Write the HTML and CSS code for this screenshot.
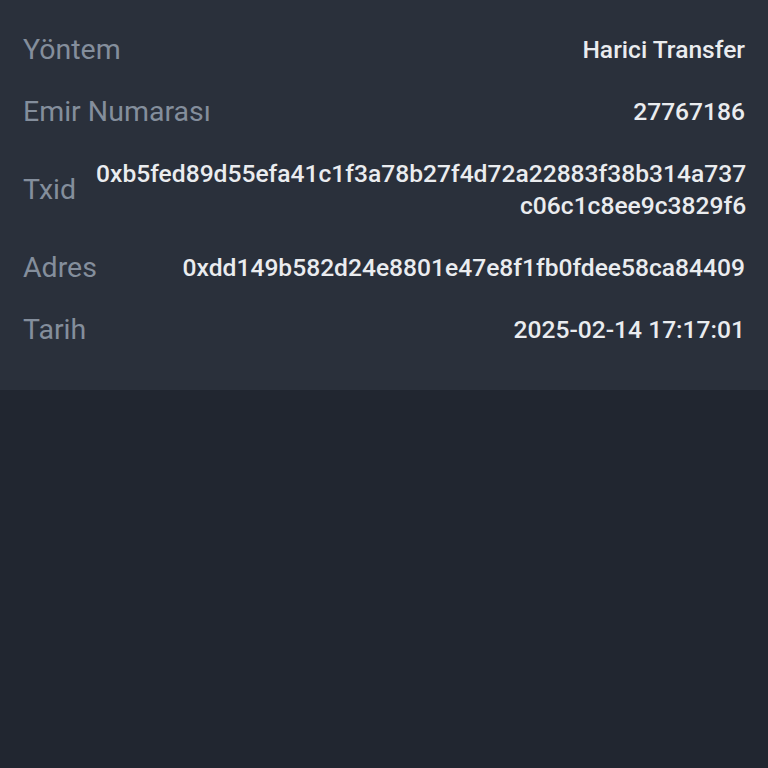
FILE: index.html
```html
<!DOCTYPE html>
<html lang="tr">
<head>
  <meta charset="UTF-8">
  <meta name="viewport" content="width=device-width, initial-scale=1">
  <title>Çekim Detayları</title>
  <link rel="stylesheet" href="styles.css">
</head>
<body>
  <!-- Detay paneli -->
  <div class="details">
    <div class="row">
      <span class="label">Yöntem</span>
      <span class="value">Harici Transfer</span>
    </div>
    <div class="row">
      <span class="label">Emir Numarası</span>
      <span class="value">27767186</span>
    </div>
    <div class="row">
      <span class="label">Txid</span>
      <span class="value">0xb5fed89d55efa41c1f3a78b27f4d72a22883f38b314a737<br>c06c1c8ee9c3829f6</span>
    </div>
    <div class="row">
      <span class="label">Adres</span>
      <span class="value">0xdd149b582d24e8801e47e8f1fb0fdee58ca84409</span>
    </div>
    <div class="row">
      <span class="label">Tarih</span>
      <span class="value">2025-02-14 17:17:01</span>
    </div>
  </div>
</body>
</html>
```

FILE: styles.css
```css
/* Reset dasar */
* {
  margin: 0;
  padding: 0;
  box-sizing: border-box;
}
body {
  font-family: Roboto, "Noto Sans", sans-serif;
  background: #212630; /* latar bawah lebih gelap */
  height: 100vh;
}

/* Panel detail */
.details {
  background: #2a303b;
  padding: 19px 23px 29px;
}

.row {
  display: flex;
  justify-content: space-between;
  align-items: center;
  gap: 20px;
  padding: 15px 0;
  line-height: 32px;
}

.label {
  font-size: 28.5px;
  color: #848e9c;
  white-space: nowrap;
}

.value {
  font-size: 24.6px;
  font-weight: 500;
  color: #eaecef;
  text-align: right;
}
```
